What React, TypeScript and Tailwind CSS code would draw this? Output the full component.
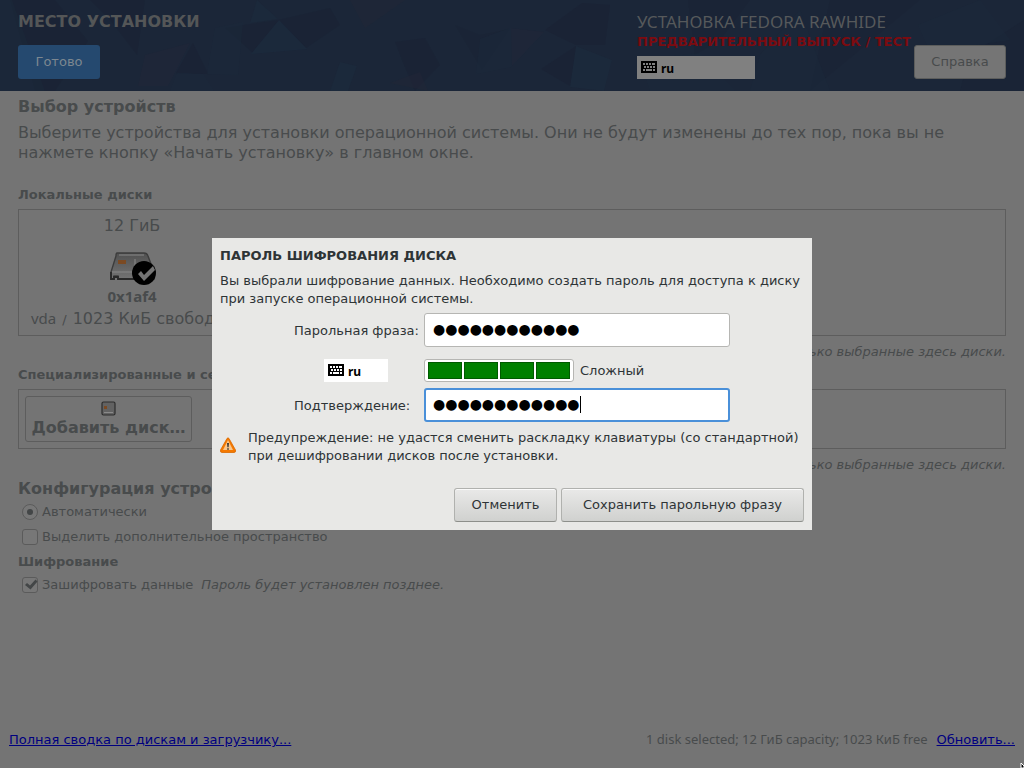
import React from "react";

const dots = "●".repeat(12);

function KeyboardIcon() {
  return (
    <svg width="16" height="12" viewBox="0 0 16 12" aria-hidden="true" shapeRendering="crispEdges">
      <rect width="16" height="12" rx="1" fill="#000" />
      <g className="fill-current">
        {[2, 5, 8, 11].map((x) => <rect key={x} x={x} y="2" width="2" height="2" />)}
        <rect x="13" y="2" width="1" height="2" />
        {[3, 6, 9, 12].map((x) => <rect key={x} x={x} y="5" width="2" height="2" />)}
        <rect x="2" y="8" width="2" height="2" />
        <rect x="5" y="8" width="6" height="2" />
        <rect x="12" y="8" width="2" height="2" />
      </g>
    </svg>
  );
}

function Layout({ className }: { className: string }) {
  return (
    <div className={`flex h-[23px] items-start gap-1 px-1 pt-[5px] ${className}`}>
      <KeyboardIcon />
      <span className="font-['Noto_Sans',sans-serif] text-[12px] leading-4 font-bold text-black">ru</span>
    </div>
  );
}

function Facets() {
  return (
    <svg className="absolute inset-0 h-full w-full" viewBox="0 0 1024 91" preserveAspectRatio="none" aria-hidden="true">
      <g fill="#1a2133">
        <path d="M10 0 55 0 88 41 55 91 35 91Z" opacity=".4" />
        <path d="M90 0 145 0 137 55 110 20Z" opacity=".4" />
        <path d="M193 43 208 74 176 73Z" opacity=".6" />
        <path d="M225 28 278 20 330 8 340 25 306 48 253 53Z" opacity=".4" />
        <path d="M395 42 425 38 440 65 415 91 402 60Z" opacity=".4" />
        <path d="M545 30 582 3 610 5 605 45 576 45Z" opacity=".6" />
        <path d="M541 69 576 46 570 86Z" opacity=".6" />
        <path d="M455 25 480 35 510 29 482 70Z" opacity=".3" />
        <path d="M688 0 750 0 720 40 695 55Z" opacity=".3" />
        <path d="M830 0 920 0 860 50 810 91Z" opacity=".3" />
        <path d="M970 55 1024 20 1024 91 960 91Z" opacity=".5" />
      </g>
      <g fill="#1c2b3d">
        <path d="M279 20 307 49 251 54Z" opacity=".8" />
        <path d="M257 0 278 19 250 23Z" opacity=".5" />
        <path d="M177 73 203 74 214 91 170 91Z" opacity=".4" />
        <path d="M215 28 243 22 238 75 207 74Z" opacity=".4" />
        <path d="M0 0 12 0 45 91 0 91Z" opacity=".4" />
        <path d="M340 62 357 66 348 91 330 91Z" opacity=".5" />
        <path d="M480 39 510 28 543 33 511 67 476 74Z" opacity=".4" />
        <path d="M576 46 612 60 604 91 570 87Z" opacity=".5" />
        <path d="M640 60 700 53 735 91 650 91Z" opacity=".4" />
        <path d="M760 55 800 10 830 91 750 91Z" opacity=".4" />
        <path d="M918 25 980 0 1010 40 930 52Z" opacity=".4" />
      </g>
      <g fill="#222637" opacity=".5">
        <path d="M145 55 190 43 168 86 138 86Z" />
        <path d="M390 83 420 72 428 91Z" />
        <path d="M511 28 544 32 512 66Z" />
        <path d="M350 0 405 0 365 28Z" />
      </g>
    </svg>
  );
}

function DriveIcon() {
  return (
    <svg width="50" height="38" viewBox="0 0 50 38" aria-hidden="true">
      <defs>
        <linearGradient id="drive" x1="0" y1="0" x2="0" y2="1">
          <stop offset="0" stopColor="#505050" />
          <stop offset="1" stopColor="#747474" />
        </linearGradient>
      </defs>
      <path d="M10 3H37Q40 3 41 6L47 22V29H11V26H7V29H4V22L9 6Q9 3 10 3Z" fill="url(#drive)" stroke="#3c3c3c" strokeWidth="1.4" />
      <path d="M12 5H37M5 22H42" stroke="#888" fill="none" />
      <path d="M4 22V29H7V27H11V29H34" stroke="#292929" strokeWidth="1.8" fill="none" />
      <rect x="11" y="10" width="8" height="4" fill="#7b4a23" />
      <path d="M28 9V16" stroke="#8a8a8a" />
      <circle cx="37" cy="23" r="12" fill="#000" />
      <path d="M31 24 34 21 37 25 46 16 48 20 37 31Z" fill="#747474" />
    </svg>
  );
}

function WarningIcon() {
  return (
    <svg className="mb-1 shrink-0" width="16" height="16" viewBox="0 0 16 16" aria-hidden="true">
      <path d="M7 1.5Q8 .2 9 1.5L15.5 13Q16 15.5 14 15.5H2Q0 15.5.5 13Z" fill="#f57900" stroke="#d96a00" strokeWidth=".8" />
      <path d="M8 3 13 13H3Z" fill="#f9c68c" />
      <path d="M7 6H9L8.6 10.2H7.4ZM7.2 11.2H8.8V12.8H7.2Z" fill="#3c3a36" />
    </svg>
  );
}

const note = "Будут изменены только выбранные здесь диски.";
const box = "grid h-4 w-4 shrink-0 appearance-none place-items-center border border-[#5b5b5b] bg-[#777]";
const dialogButton =
  "h-[34px] rounded-[3px] border border-[#b0b1ae] border-b-[#8d8f8b] bg-linear-to-b from-[#e9e9e8] to-[#d0d1cf] text-[#2e3436] shadow-[inset_0_1px_0_#fafafa]";

export default function App() {
  return (
    <div className="flex min-h-screen flex-col bg-[#747474] font-['DejaVu_Sans',sans-serif] text-[13px] leading-[18px] text-[#484b4c]">
      <header className="relative h-[91px] bg-[#1b2638]">
        <Facets />
        <div className="relative flex h-full items-end justify-between px-[18px] pb-3">
          <div className="flex flex-col items-start gap-[13px]">
            <h1 className="text-[16px] leading-5 font-bold text-[#545657]">МЕСТО УСТАНОВКИ</h1>
            <button className="h-[34px] min-w-[82px] rounded-[3px] bg-[#25496f] px-4 text-[#7c8790]">Готово</button>
          </div>
          <div className="flex items-end">
            <div className="flex min-w-[277px] flex-col items-start">
              <p className="font-['Noto_Sans',sans-serif] text-[17px] leading-5 text-[#56595b]">УСТАНОВКА FEDORA RAWHIDE</p>
              <p className="mb-1 leading-5 font-bold text-[#7c0b10]">ПРЕДВАРИТЕЛЬНЫЙ ВЫПУСК / ТЕСТ</p>
              <Layout className="w-[118px] bg-[#808080] text-[#808080]" />
            </div>
            <button className="h-[34px] min-w-[92px] rounded-[3px] border border-[#5c5d5c] bg-[#757575] px-4 text-[#484b4c]">Справка</button>
          </div>
        </div>
      </header>

      <main className="px-[18px] pt-1.5">
        <h2 className="text-[16px] leading-5 font-bold">Выбор устройств</h2>
        <p className="mt-1.5 max-w-[960px] text-[16px] leading-5">
          Выберите устройства для установки операционной системы. Они не будут изменены до тех пор, пока вы не нажмете кнопку «Начать установку» в главном окне.
        </p>

        <h3 className="mt-[23px] font-bold">Локальные диски</h3>
        <section className="mt-[5px] h-[127px] border border-[#5d5d5d] pt-1.5 pl-3">
          <div className="flex w-[202px] flex-col items-center text-[16px]">
            <p className="leading-5">12 ГиБ</p>
            <div className="mt-3.5"><DriveIcon /></div>
            <p className="font-['Noto_Sans',sans-serif] text-[15px] leading-4 font-bold">0x1af4</p>
            <p className="mt-[3px] flex items-baseline gap-1.5 self-start leading-[22px] whitespace-nowrap">
              <span className="font-['Noto_Sans',sans-serif] text-[15px]">vda</span>
              <span className="text-[13px]">/</span>
              <span>1023 КиБ свободно</span>
            </p>
          </div>
        </section>
        <p className="mt-[7px] text-right italic">{note}</p>

        <h3 className="mt-[5px] font-bold">Специализированные и сетевые диски</h3>
        <section className="mt-[5px] h-[60px] border border-[#5d5d5d] p-1.5">
          <button className="flex h-[46px] w-[167px] flex-col items-center rounded-[3px] border border-[#5d5d5d] bg-[#747474] pt-1">
            <svg width="16" height="16" viewBox="0 0 16 16" aria-hidden="true">
              <rect x="1" y="1" width="13" height="13" rx="1.5" fill="#626262" stroke="#2c2c2c" strokeWidth="1.2" />
              <path d="M3 11.5H12" fill="none" stroke="#8a8a8a" />
              <rect x="3" y="5" width="3" height="3" fill="#7b4a23" />
            </svg>
            <span className="text-[16px] leading-[22px] font-bold whitespace-nowrap">Добавить диск…</span>
          </button>
        </section>
        <p className="mt-[7px] text-right italic">{note}</p>

        <h2 className="mt-[5px] text-[16px] leading-5 font-bold">Конфигурация устройств хранения</h2>
        <div className="mt-0.5 ml-1">
          <label className="flex h-[22px] items-center gap-1">
            <input type="radio" defaultChecked className={`${box} rounded-full before:h-1.5 before:w-1.5 before:rounded-full before:bg-[#434647]`} />
            Автоматически
          </label>
          <label className="mt-[3px] flex h-[22px] items-center gap-1">
            <input type="checkbox" className={`${box} rounded-[3px]`} />
            Выделить дополнительное пространство
          </label>
        </div>
        <h3 className="mt-[5px] font-bold">Шифрование</h3>
        <div className="mt-[3px] ml-1 flex h-[22px] items-center gap-2">
          <label className="flex items-center gap-1">
            <span className="relative grid h-4 w-4">
              <input type="checkbox" defaultChecked className={`${box} rounded-[3px]`} />
              <svg className="absolute inset-0 overflow-visible" width="16" height="16" viewBox="0 0 16 16" aria-hidden="true">
                <path d="M3 8 5 6 8 8.5 13.5 2.5 15.5 4.5 8.5 12.5Z" fill="#434647" />
              </svg>
            </span>
            Зашифровать данные
          </label>
          <span className="italic">Пароль будет установлен позднее.</span>
        </div>
      </main>

      <footer className="mt-auto flex items-center justify-between px-[9px] pb-[18px] leading-5">
        <a href="#summary" className="text-[#000080] underline">Полная сводка по дискам и загрузчику...</a>
        <div className="flex items-start gap-[9px]">
          <span className="font-['Noto_Sans',sans-serif] leading-[18px]">1 disk selected; 12 ГиБ capacity; 1023 КиБ free</span>
          <a href="#refresh" className="text-[#000080] underline">Обновить...</a>
        </div>
      </footer>

      <div className="fixed inset-0 flex items-center justify-center">
        <section role="dialog" aria-modal="true" aria-labelledby="title" className="w-[600px] bg-[#e8e8e6] px-2 pt-[9px] pb-2 text-[#2e3436]">
          <h2 id="title" className="font-bold">ПАРОЛЬ ШИФРОВАНИЯ ДИСКА</h2>
          <p className="mt-[7px]">
            Вы выбрали шифрование данных. Необходимо создать пароль для доступа к диску при запуске операционной системы.
          </p>
          <div className="mt-[5px] grid grid-cols-[124px_306px] items-center gap-x-1.5 pl-[74px]">
            <label htmlFor="phrase" className="pt-0.5 whitespace-nowrap">Парольная фраза:</label>
            <input id="phrase" defaultValue={dots} className="h-[34px] rounded-[3px] border border-[#b6b6b3] bg-white px-2 pb-0.5 text-[14px] text-black outline-none" />
            <Layout className="mt-3 w-16 justify-self-center bg-white text-white" />
            <div className="mt-3 flex items-center gap-1.5">
              <div role="meter" aria-label="Надёжность" aria-valuenow={4} aria-valuemin={0} aria-valuemax={4} className="flex h-[23px] w-[150px] gap-0.5 rounded-[3px] border border-[#b6b6b3] bg-white px-[3px] py-0.5">
                {[1, 2, 3, 4].map((n) => (
                  <span key={n} className="flex-1 border border-[#005a00] bg-[#008000]" />
                ))}
              </div>
              <span>Сложный</span>
            </div>
            <label htmlFor="confirm" className="mt-1.5 pt-0.5 whitespace-nowrap">Подтверждение:</label>
            <div className="relative mt-1.5">
              <input id="confirm" defaultValue={dots} className="block h-[34px] w-full rounded-[3px] border-2 border-[#4a90d9] bg-white px-[7px] pb-0.5 text-[14px] text-black outline-none" />
              <span className="absolute top-2 left-[156px] h-[17px] w-px bg-black" />
            </div>
          </div>
          <div className="mt-[7px] flex items-center gap-3">
            <WarningIcon />
            <p>Предупреждение: не удастся сменить раскладку клавиатуры (со стандартной) при дешифровании дисков после установки.</p>
          </div>
          <div className="mt-[23px] flex justify-end gap-1">
            <button className={`${dialogButton} min-w-[103px] px-4`}>Отменить</button>
            <button className={`${dialogButton} min-w-[243px] px-5`}>Сохранить парольную фразу</button>
          </div>
        </section>
      </div>

      <svg className="pointer-events-none fixed right-0 bottom-0" width="4" height="5" viewBox="0 0 4 5" aria-hidden="true">
        <path d="M1 0 4 3V5H1Z" fill="#000" stroke="#fff" />
      </svg>
    </div>
  );
}
